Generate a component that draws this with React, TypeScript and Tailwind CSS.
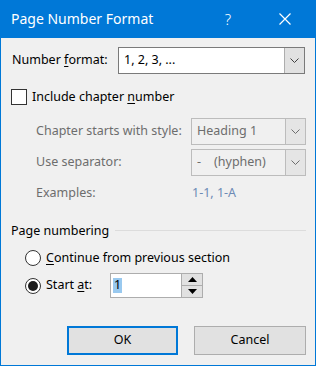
import React from 'react'

const FONT = { fontFamily: '"Noto Sans", "Open Sans", sans-serif' }

function Chevron({ disabled }: { disabled?: boolean }) {
  return (
    <svg width="9" height="5" viewBox="0 0 9 5" fill="none">
      <path d="M0.5 0.5 L4.5 4.5 L8.5 0.5" stroke={disabled ? '#6d6d6d' : '#404040'} strokeWidth="1" />
    </svg>
  )
}

function Combo({ value, disabled, className }: { value: string; disabled?: boolean; className: string }) {
  return (
    <div
      className={`flex h-[27px] border ${disabled ? 'border-[#bcbcbc] bg-[#f0f0f0] text-[#6d6d6d]' : 'border-[#7a7a7a] bg-white text-black'} ${className}`}
    >
      <div className="flex-1 pl-[5px] flex items-center whitespace-pre">{value}</div>
      <div className={`w-[20px] flex items-center justify-center border-l ${disabled ? 'border-[#bcbcbc] bg-[#e5e5e5]' : 'border-[#adadad] bg-[#e1e1e1]'}`}>
        <Chevron disabled={disabled} />
      </div>
    </div>
  )
}

export default function App() {
  return (
    <div className="w-[316px] h-[366px] bg-[#0078d7] flex flex-col text-[12.5px] leading-none whitespace-nowrap" style={FONT}>
      {/* title bar */}
      <div className="h-[38px] flex items-center text-white text-[14px]">
        <span className="pl-[11px] flex-1 pb-[1px]">Page Number Format</span>
        <span className="w-[20px] text-center text-[15px] font-light">?</span>
        <svg className="ml-[41px] mr-[25px]" width="12" height="12" viewBox="0 0 12 12">
          <path d="M0.5 0.5 L11.5 11.5 M11.5 0.5 L0.5 11.5" stroke="white" strokeWidth="1.2" />
        </svg>
      </div>

      <div className="flex-1 mx-px mb-px bg-[#f0f0f0] flex flex-col pl-[10px] pr-[9px] text-black">
        <div className="flex items-center h-[27px] mt-[9px]">
          <span className="w-[107px] pl-px">
            Number <span className="underline underline-offset-2">f</span>ormat:
          </span>
          <Combo value="1, 2, 3, ..." className="w-[187px]" />
        </div>

        <div className="flex items-center h-[16px] mt-[15px]">
          <div className="w-[16px] h-[16px] border border-[#333] bg-white" />
          <span className="ml-[5px]">
            Include chapter <span className="underline underline-offset-2">n</span>umber
          </span>
        </div>

        <div className="flex flex-col pl-[25px] text-[#6d6d6d]">
          <div className="flex items-center h-[27px] mt-[13px]">
            <span className="w-[155px]">Chapter starts with style:</span>
            <Combo value="Heading 1" disabled className="w-[115px]" />
          </div>
          <div className="flex items-center h-[27px] mt-[4px]">
            <span className="w-[155px]">Use separator:</span>
            <Combo value={'-    (hyphen)'} disabled className="w-[115px]" />
          </div>
          <div className="flex items-center h-[16px] mt-[9px]">
            <span className="w-[156px]">Examples:</span>
            <span className="text-[#6d8ab5]">1-1, 1-A</span>
          </div>
        </div>

        <div className="flex items-center h-[16px] mt-[22px]">
          <span>Page numbering</span>
          <div className="flex-1 h-px bg-[#dcdcdc] ml-[6px] mt-[-2px]" />
        </div>

        <div className="flex items-center h-[16px] mt-[11px] pl-[14px]">
          <div className="w-[16px] h-[16px] rounded-full border border-[#333] bg-white" />
          <span className="ml-[5px]">
            <span className="underline underline-offset-2">C</span>ontinue from previous section
          </span>
        </div>

        <div className="flex items-center h-[25px] mt-[7px] pl-[14px]">
          <div className="w-[16px] h-[16px] rounded-full border border-[#333] bg-white flex items-center justify-center">
            <div className="w-[10px] h-[10px] rounded-full bg-[#1a1a1a]" />
          </div>
          <span className="ml-[5px] w-[64px]">
            Start <span className="underline underline-offset-2">a</span>t:
          </span>
          <div className="flex w-[93px] h-[25px] border border-[#adadad] bg-white">
            <div className="flex-1 flex items-center pl-[2px]">
              <span className="bg-[#99c9ef] px-px py-px">1</span>
            </div>
            <div className="w-[21px] flex flex-col border-l border-[#adadad]">
              <div className="flex-1 flex items-center justify-center bg-[#e1e1e1] border-b border-[#adadad]">
                <svg width="9" height="5" viewBox="0 0 9 5"><path d="M0 5 L4.5 0 L9 5 Z" fill="#000" /></svg>
              </div>
              <div className="flex-1 flex items-center justify-center bg-[#e1e1e1]">
                <svg width="9" height="5" viewBox="0 0 9 5"><path d="M0 0 L4.5 5 L9 0 Z" fill="#000" /></svg>
              </div>
            </div>
          </div>
        </div>

        <div className="flex justify-end gap-[16px] mt-[28px]">
          <button className="w-[111px] h-[29px] border-2 border-[#0078d7] bg-[#e1e1e1]">OK</button>
          <button className="w-[112px] h-[29px] border border-[#adadad] bg-[#e1e1e1]">Cancel</button>
        </div>
      </div>
    </div>
  )
}
